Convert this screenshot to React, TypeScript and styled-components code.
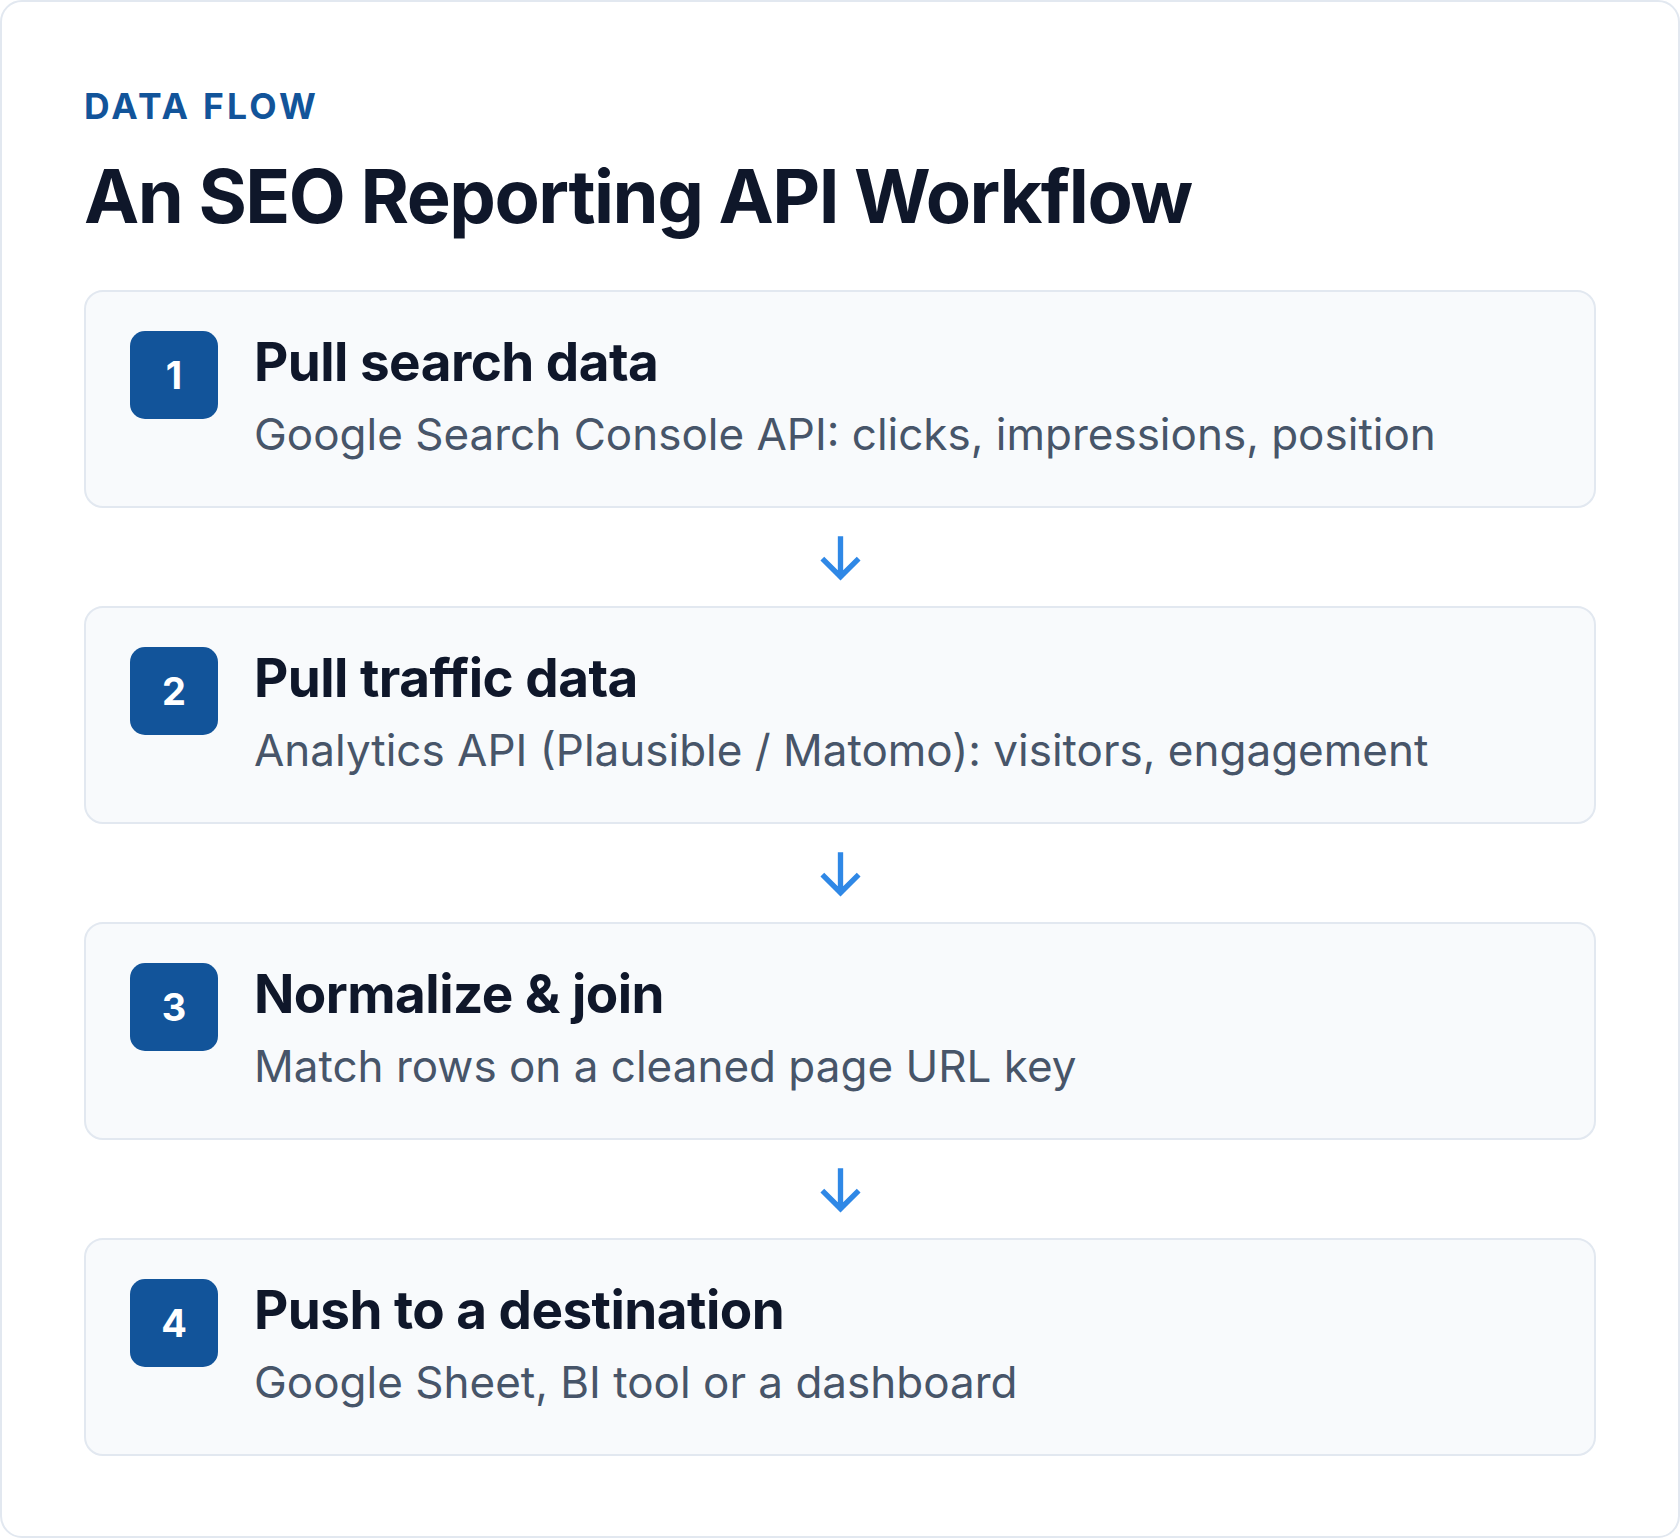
import { createGlobalStyle, styled } from "styled-components";

const Global = createGlobalStyle`
  body { margin: 0; background: #ffffff; font-family: Inter, "Noto Sans", sans-serif; }
`;

const Card = styled.div`
  width: 1680px;
  height: 1538px;
  box-sizing: border-box;
  border: 2px solid #e2e8f0;
  border-radius: 22px;
  background: #fff;
  padding: 84px 82px 0 82px;
`;

const Eyebrow = styled.div`
  color: #12549a;
  font-size: 35.5px;
  font-weight: 700;
  letter-spacing: 0.09em;
  line-height: 42px;
`;

const Heading = styled.h1`
  margin: 26px 0 52px;
  color: #0f172a;
  font-size: 74px;
  font-weight: 700;
  letter-spacing: -0.02em;
  line-height: 84px;
`;

const Steps = styled.div`
  display: flex;
  flex-direction: column;
`;

const Step = styled.div`
  display: flex;
  gap: 36px;
  height: 218px;
  box-sizing: border-box;
  padding: 39px 44px;
  background: #f8fafc;
  border: 2px solid #e2e8f0;
  border-radius: 19px;
`;

const Badge = styled.div`
  flex: none;
  width: 88px;
  height: 88px;
  border-radius: 15px;
  background: #12549a;
  color: #fff;
  font-size: 38px;
  font-weight: 700;
  display: flex;
  align-items: center;
  justify-content: center;
`;

const Body = styled.div`
  display: flex;
  flex-direction: column;
`;

const Title = styled.div`
  color: #0f172a;
  font-size: 53px;
  font-weight: 700;
  letter-spacing: -0.01em;
  line-height: 62px;
`;

const Desc = styled.div`
  margin-top: 15px;
  color: #475569;
  font-size: 44px;
  line-height: 52px;
`;

const ArrowRow = styled.div`
  height: 98px;
  display: flex;
  align-items: center;
  justify-content: center;
`;

const steps = [
  ["Pull search data", "Google Search Console API: clicks, impressions, position"],
  ["Pull traffic data", "Analytics API (Plausible / Matomo): visitors, engagement"],
  ["Normalize & join", "Match rows on a cleaned page URL key"],
  ["Push to a destination", "Google Sheet, BI tool or a dashboard"],
];

const Arrow = () => (
  <svg width="47" height="47" viewBox="0 0 44 44" fill="none" stroke="#2f88e6" strokeWidth="5">
    <path d="M22 2v38M5 23l17 17 17-17" />
  </svg>
);

export default function App() {
  return (
    <>
      <Global />
      <Card>
        <Eyebrow>DATA FLOW</Eyebrow>
        <Heading>An SEO Reporting API Workflow</Heading>
        <Steps>
          {steps.map(([t, d], i) => (
            <div key={t}>
              {i > 0 && (
                <ArrowRow>
                  <Arrow />
                </ArrowRow>
              )}
              <Step>
                <Badge>{i + 1}</Badge>
                <Body>
                  <Title>{t}</Title>
                  <Desc>{d}</Desc>
                </Body>
              </Step>
            </div>
          ))}
        </Steps>
      </Card>
    </>
  );
}
